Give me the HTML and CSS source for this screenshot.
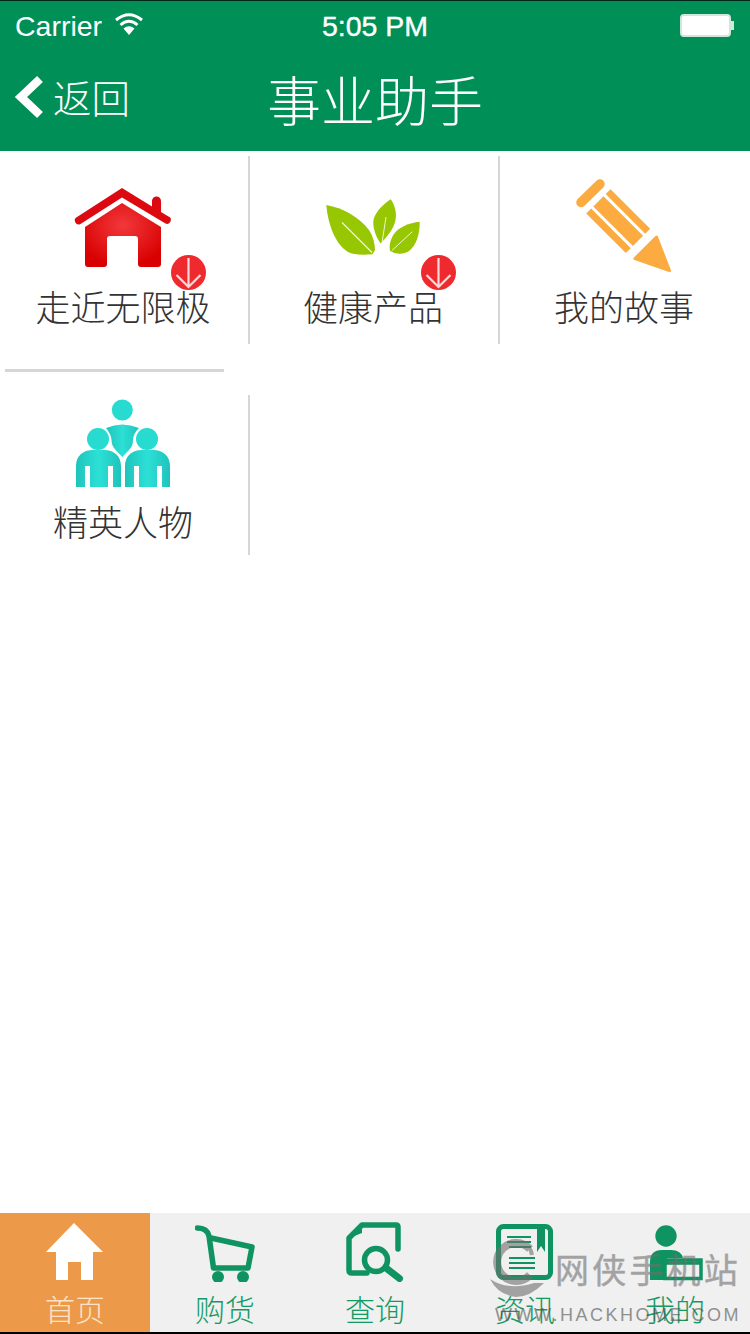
FILE: index.html
```html
<!DOCTYPE html>
<html lang="zh-CN">
<head>
    <meta charset="UTF-8">
    <meta name="viewport" content="width=device-width, initial-scale=1.0">
    <title>事业助手</title>
    <link rel="stylesheet" href="styles.css">
</head>
<body>
    <div class="screen">
        <header class="header">
            <div class="status-bar">
                <div class="status-left">
                    <span>Carrier</span>
                    <svg class="wifi" viewBox="0 0 30 22">
                        <path d="M15 22 L9.5 15.5 Q15 11 20.5 15.5 Z" fill="#fff"/>
                        <path d="M6.5 12 Q15 4.5 23.5 12" fill="none" stroke="#fff" stroke-width="3"/>
                        <path d="M2 7 Q15 -3.5 28 7" fill="none" stroke="#fff" stroke-width="3"/>
                    </svg>
                </div>
                <div class="status-time">5:05 PM</div>
                <div class="battery"><div class="battery-body"></div><div class="battery-nub"></div></div>
            </div>
            <div class="nav-bar">
                <div class="back">
                    <svg class="back-arrow" viewBox="0 0 32 46">
                        <path d="M27 6 L8 24 L27 42" fill="none" stroke="#fff" stroke-width="8.5"/>
                    </svg>
                    <span>返回</span>
                </div>
                <div class="nav-title">事业助手</div>
            </div>
        </header>

        <main class="content">
            <div class="grid-row row-one">
                <div class="cell">
                    <svg class="cell-icon" viewBox="0 -6 100 96">
                        <defs>
                            <radialGradient id="houseRed" cx="50%" cy="35%" r="65%">
                                <stop offset="0" stop-color="#f2383c"/>
                                <stop offset="1" stop-color="#d80000"/>
                            </radialGradient>
                        </defs>
                        <path d="M49 4 L79 22.5 V17 a4.5 4.5 0 0 1 9 0 V28 L95.5 32.5 a3.5 3.5 0 0 1 -3 7 L49 13.5 L7.5 40 a3.5 3.5 0 0 1 -3.5 -7 Z" fill="#dc0a10"/>
                        <path d="M49 19 L88 43 V80 a3 3 0 0 1 -3 3 H68 a3 3 0 0 1 -3 -3 V55 a3 3 0 0 0 -3 -3 H37 a3 3 0 0 0 -3 3 V80 a3 3 0 0 1 -3 3 H15 a3 3 0 0 1 -3 -3 V43 Z" fill="url(#houseRed)"/>
                    </svg>
                    <div class="cell-label">走近无限极</div>
                    <svg class="badge" viewBox="0 0 35 35">
                        <circle cx="17.5" cy="17.5" r="17.5" fill="#ee2a2e"/>
                        <path d="M17.5 3 V32 M5.5 20 L17.5 32 L29.5 20" fill="none" stroke="#fbd9d9" stroke-width="2.2"/>
                    </svg>
                </div>
                <div class="cell">
                    <svg class="cell-icon" viewBox="0 -6 100 96">
                        <path d="M3.3 21 C20 24 36 33 46 46 C50 52 52 60 52 66 L49.5 70.3 C40 71 30 71 25 68 C12 60 5 40 3.3 21 Z" fill="#97c703"/>
                        <path d="M19 38.5 L49 68.5" stroke="#eef6cc" stroke-width="1.2"/>
                        <path d="M67.7 15.3 C72 21 74 30 72.5 36 C71 45 63 54 57.5 59.5 C54 54 50 46 50.3 38 C50.5 30 60 20 67.7 15.3 Z" fill="#97c703"/>
                        <path d="M63 33 L59 59" stroke="#eef6cc" stroke-width="1"/>
                        <path d="M96.7 37.7 C86 39 76 43 71 50 C67 56 66 62 67 67 C72 70 80 71 86 67 C93 62 97 50 96.7 37.7 Z" fill="#97c703"/>
                        <path d="M68.7 66.7 L89.3 47.7" stroke="#eef6cc" stroke-width="1"/>
                    </svg>
                    <div class="cell-label">健康产品</div>
                    <svg class="badge" viewBox="0 0 35 35">
                        <circle cx="17.5" cy="17.5" r="17.5" fill="#ee2a2e"/>
                        <path d="M17.5 3 V32 M5.5 20 L17.5 32 L29.5 20" fill="none" stroke="#fbd9d9" stroke-width="2.2"/>
                    </svg>
                </div>
                <div class="cell">
                    <svg class="cell-icon" viewBox="0 -6 100 96">
                        <g fill="none" stroke="#fbab3f">
                            <path d="M7 18.5 L26 0" stroke-width="9.5" stroke-linecap="round"/>
                            <path d="M34.1 7.6 L73.7 47.2" stroke-width="7"/>
                            <path d="M24.4 17.3 L64 56.9" stroke-width="14.4"/>
                            <path d="M14.7 27 L54.3 66.6" stroke-width="7"/>
                        </g>
                        <path d="M82.5 53 L95.5 86.5 L61 74.5 Z" fill="#fbab3f" stroke="#fbab3f" stroke-width="3" stroke-linejoin="round"/>
                    </svg>
                    <div class="cell-label">我的故事</div>
                </div>
            </div>

            <div class="divider"></div>

            <div class="grid-row row-two">
                <div class="cell">
                    <svg class="cell-icon people" viewBox="0 0 100 92">
                        <defs>
                            <linearGradient id="teal" x1="0" y1="0" x2="1" y2="0">
                                <stop offset="0" stop-color="#1fc4bc"/>
                                <stop offset="0.5" stop-color="#2ce0d5"/>
                                <stop offset="1" stop-color="#1fc4bc"/>
                            </linearGradient>
                        </defs>
                        <circle cx="49.3" cy="12" r="10.5" fill="#27dbd1"/>
                        <circle cx="25" cy="41" r="11" fill="#27dbd1"/>
                        <circle cx="74" cy="41" r="11" fill="#27dbd1"/>
                        <path d="M33 30 Q49 23 66 30 C62 34 60 38 60 42 C60 47 58 50 56 52 L49.3 59 L42.7 52 C40 49 38.5 46 38.5 42 C38.5 38 36 34 33 30 Z" fill="url(#teal)"/>
                        <path d="M3 89 V68 C3 58 10 52 20 52 H31 C41 52 48 58 48 68 V89 H40 V68 H35 V89 H17 V68 H12 V89 Z" fill="url(#teal)"/>
                        <path d="M52 89 V68 C52 58 59 52 69 52 H80 C90 52 97 58 97 68 V89 H89 V68 H84 V89 H66 V68 H61 V89 Z" fill="url(#teal)"/>
                    </svg>
                    <div class="cell-label">精英人物</div>
                </div>
            </div>
        </main>

        <nav class="tabbar">
            <div class="tab active">
                <svg class="tab-icon" viewBox="0 0 60 60">
                    <path d="M29 1 L58 30 H48 V58 H36 V40 H23 V58 H11 V30 H1 Z" fill="#fff"/>
                </svg>
                <div class="tab-label">首页</div>
            </div>
            <div class="tab">
                <svg class="tab-icon" viewBox="0 0 60 60">
                    <path d="M2.5 6 Q12 6 14 14 L18.5 46 H53 L57 25 L16 16" fill="none" stroke="#0f9360" stroke-width="5.5" stroke-linecap="round" stroke-linejoin="round"/>
                    <circle cx="23" cy="55" r="6" fill="#0f9360"/>
                    <circle cx="48" cy="55" r="6" fill="#0f9360"/>
                </svg>
                <div class="tab-label">购货</div>
            </div>
            <div class="tab">
                <svg class="tab-icon" viewBox="0 0 60 60">
                    <path d="M53 27 V5 Q53 3 51 3 H17 L4 16 V48 Q4 51 7 51 H22" fill="none" stroke="#0f9360" stroke-width="5.5" stroke-linecap="round" stroke-linejoin="round"/>
                    <path d="M17 3 V11 L4 16 Z" fill="#0f9360"/>
                    <circle cx="31" cy="38" r="11.5" fill="none" stroke="#0f9360" stroke-width="5.5"/>
                    <path d="M41 46 L54.5 56.5" stroke="#0f9360" stroke-width="7" stroke-linecap="round"/>
                </svg>
                <div class="tab-label">查询</div>
            </div>
            <div class="tab">
                <svg class="tab-icon" viewBox="0 0 60 60">
                    <rect x="3.5" y="4.5" width="52" height="51" rx="5" fill="none" stroke="#0f9360" stroke-width="5"/>
                    <path d="M42 3 H50 V30 L46 24 L42 30 Z" fill="#0f9360"/>
                    <path d="M12 15 H36 M12 20 H36 M14 25 H36 M14 36 H40 M14 41 H40 M14 46 H40" stroke="#0f9360" stroke-width="2"/>
                </svg>
                <div class="tab-label">资讯</div>
            </div>
            <div class="tab">
                <svg class="tab-icon person" viewBox="0 0 60 60">
                    <circle cx="21" cy="14" r="10.7" fill="#0f9360"/>
                    <path d="M5 58 V40 Q5 28 17 28 H26 Q36 28 38 36 H22 V58 Z" fill="#0f9360"/>
                    <rect x="20" y="38" width="36" height="18.5" fill="#f0f0f0" stroke="#0f9360" stroke-width="3.5"/>
                    <path d="M20 41 H56" stroke="#0f9360" stroke-width="3.5"/>
                </svg>
                <div class="tab-label">我的</div>
            </div>
            <div class="watermark">
                <svg class="wm-logo" viewBox="0 0 60 62">
                    <path d="M40 14 A19 19 0 1 0 40 40" fill="none" stroke="#6f6f6f" stroke-width="8"/>
                    <path d="M16 14 A14 14 0 0 1 42 20" fill="none" stroke="#6f6f6f" stroke-width="4"/>
                    <path d="M0 44 Q18 56 44 48 L54 48 Q40 62 26 62 Q8 60 0 44 Z" fill="#6f6f6f"/>
                </svg>
                <div class="wm-name">网侠手机站</div>
                <div class="wm-url">WWW.HACKHOME.COM</div>
            </div>
        </nav>
    </div>
</body>
</html>
```

FILE: styles.css
```css
* {
    box-sizing: border-box;
}
body {
    margin: 0;
    font-family: "Noto Sans CJK SC", "Liberation Sans", sans-serif;
    font-weight: 300;
    background-color: #fff;
}
.screen {
    display: flex;
    flex-direction: column;
    width: 750px;
    height: 1334px;
    overflow: hidden;
    border-bottom: 2px solid #000;
}

/* header */
.header {
    height: 151px;
    background-color: #008f57;
    border-top: 1px solid #05271a;
    color: #fff;
}
.status-bar {
    display: grid;
    grid-template-columns: 1fr auto 1fr;
    align-items: center;
    height: 50px;
    padding: 0 15px;
    font-family: "Liberation Sans", Arial, sans-serif;
    font-size: 28.5px;
    font-weight: 400;
}
.status-left {
    display: flex;
    align-items: center;
    gap: 12px;
}
.wifi {
    width: 30px;
    height: 22px;
    margin-top: -5px;
}
.status-time {
    -webkit-text-stroke: 0.4px #fff;
}
.battery {
    display: flex;
    align-items: center;
    justify-self: end;
    margin-right: 1px;
    margin-top: -1px;
}
.battery-body {
    width: 51px;
    height: 23px;
    background-color: #fff;
    border: 2px solid #cfe8dc;
    border-radius: 4px;
}
.battery-nub {
    width: 3px;
    height: 9px;
    background-color: #cfe8dc;
}
.nav-bar {
    position: relative;
    display: flex;
    align-items: center;
    justify-content: center;
    height: 100px;
    padding-bottom: 6px;
}
.back {
    position: absolute;
    left: 13px;
    top: 1px;
    display: flex;
    align-items: center;
    height: 88px;
    gap: 8px;
    font-size: 38.5px;
    font-weight: 300;
}
.back-arrow {
    width: 32px;
    height: 46px;
}
.nav-title {
    font-size: 54px;
    font-weight: 300;
}

/* grid */
.content {
    flex: 1;
}
.grid-row {
    display: grid;
    grid-template-columns: repeat(3, 250px);
}
.row-one {
    margin-top: 5px;
    height: 188px;
}
.row-two {
    margin-top: 23px;
    height: 160px;
}
.cell {
    position: relative;
    display: flex;
    flex-direction: column;
    align-items: center;
    width: 250px;
    padding-right: 2px;
    border-right: 2px solid #d6d6d6;
}
.row-one .cell {
    padding-top: 22px;
}
.row-one .cell:last-child {
    border-right: none;
}
.row-two .cell {
    padding-top: 3px;
}
.cell-icon {
    display: block;
    width: 100px;
    height: 96px;
}
.cell-icon.people {
    height: 92px;
}
.cell-label {
    margin-top: 12px;
    font-size: 35px;
    line-height: 40px;
    color: #333;
    white-space: nowrap;
}
.row-two .cell-label {
    margin-top: 11px;
}
.badge {
    position: absolute;
    left: 170.5px;
    top: 98.5px;
    width: 35px;
    height: 35px;
}
.divider {
    width: 219px;
    height: 3px;
    margin: 25px 0 0 5px;
    background-color: #d6d6d6;
}

/* tab bar */
.tabbar {
    position: relative;
    display: grid;
    grid-template-columns: repeat(5, 150px);
    height: 119px;
    background-color: #f0f0f0;
}
.tab {
    display: flex;
    flex-direction: column;
    align-items: center;
    padding-top: 9px;
    color: #159a63;
}
.tab.active {
    background-color: #ec9a4a;
    color: #fde3c6;
}
.tab-icon {
    display: block;
    width: 60px;
    height: 60px;
}
.tab-label {
    margin-top: 8px;
    font-size: 30px;
    line-height: 36px;
}

/* watermark over the tab bar */
.watermark {
    position: absolute;
    left: 490px;
    top: 22px;
    width: 260px;
    height: 95px;
    opacity: 0.6;
    color: #6f6f6f;
    pointer-events: none;
}
.wm-logo {
    position: absolute;
    left: 0;
    top: 0;
    width: 60px;
    height: 62px;
}
.wm-name {
    position: absolute;
    left: 65px;
    top: 14px;
    font-size: 34px;
    line-height: 40px;
    letter-spacing: 3.2px;
    font-weight: 400;
    -webkit-text-stroke: 0.4px #6f6f6f;
    white-space: nowrap;
}
.wm-url {
    position: absolute;
    left: 5px;
    top: 70px;
    font-family: "Liberation Sans", Arial, sans-serif;
    font-size: 18px;
    line-height: 20px;
    letter-spacing: 2.5px;
    color: #505050;
    white-space: nowrap;
}
```
